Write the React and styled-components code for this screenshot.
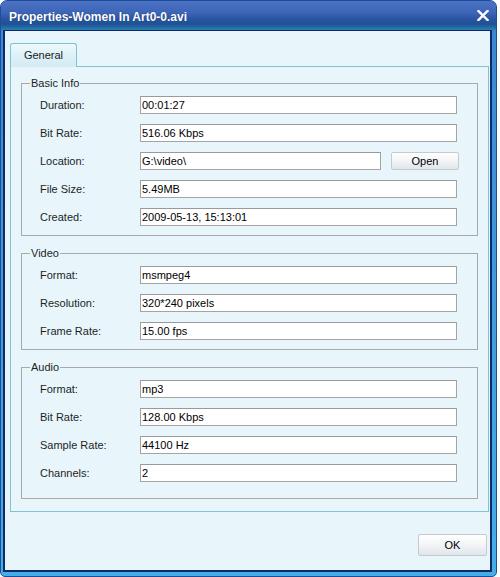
import React from "react";
import styled, { createGlobalStyle } from "styled-components";

const GlobalStyle = createGlobalStyle`
  html, body { margin: 0; padding: 0; background: #ffffff; }
  body { font-family: "Liberation Sans", Arial, sans-serif; }
  * { box-sizing: border-box; }
`;

const Window = styled.div`
  width: 497px;
  height: 577px;
  border: 1px solid #1b4d9a;
  border-radius: 7px 7px 5px 5px;
  background: linear-gradient(180deg, #3a86d0 0%, #46aee6 100%);
  display: flex;
  flex-direction: column;
  overflow: hidden;
`;

const TitleBar = styled.div`
  height: 29px;
  flex: none;
  padding: 2px 7px 0 8px;
  display: flex;
  align-items: center;
  justify-content: space-between;
  background: linear-gradient(
    180deg,
    #4c72c2 0%,
    #3d65b8 40%,
    #2a54a3 62%,
    #1e5294 80%,
    #2a80b2 100%
  );
  color: #ffffff;
  font-weight: bold;
  font-size: 12px;
  letter-spacing: 0;
`;

const Title = styled.span`
  text-shadow: 0 0 1px rgba(0, 0, 40, 0.5);
`;

const CloseIcon = styled.svg`
  display: block;
  margin-top: -2px;
`;

const Frame = styled.div`
  flex: 1;
  display: flex;
  padding: 0 4px 4px 2px;
`;

const Content = styled.div`
  flex: 1;
  display: flex;
  flex-direction: column;
  background: #e8f6fb;
  border: 2px solid #0d2a6c;
  border-top-width: 1px;
  padding: 12px 1px 0 5px;
`;

const TabStrip = styled.div`
  display: flex;
`;

const Tab = styled.div`
  position: relative;
  z-index: 1;
  width: 67px;
  height: 24px;
  margin-bottom: -1px;
  border: 1px solid #7fc1d5;
  border-bottom: none;
  border-radius: 3px 3px 0 0;
  background: linear-gradient(180deg, #eef9fc 0%, #dcf0f7 55%, #d4ebf4 100%);
  display: flex;
  align-items: center;
  justify-content: center;
  padding-bottom: 1px;
  font-size: 11px;
  color: #1a1a1a;
`;

const Panel = styled.div`
  width: 479px;
  border: 1px solid #7fc1d5;
  padding: 9px 10px 12px 10px;
  display: flex;
  flex-direction: column;
  gap: 10px;
`;

const Group = styled.fieldset`
  margin: 0;
  padding: 0;
  min-width: 0;
  border: 1px solid #a9a9a9;
`;

const Legend = styled.legend`
  margin-left: 8px;
  padding: 0 1px;
  font-size: 11px;
  line-height: 14px;
  color: #1e1e1e;
`;

const Rows = styled.div`
  display: flex;
  flex-direction: column;
  gap: 10px;
  padding: 6px 0 ${(p) => p.$pb}px 18px;
`;

const Row = styled.div`
  display: grid;
  grid-template-columns: 100px auto;
  align-items: center;
  height: 18px;
`;

const Label = styled.span`
  font-size: 11px;
  line-height: 18px;
  color: #1e1e1e;
  white-space: nowrap;
`;

const Inline = styled.div`
  display: flex;
  align-items: center;
`;

const Field = styled.div`
  width: ${(p) => p.$w}px;
  height: 18px;
  border: 1px solid #a4a4a4;
  border-top-color: #9a9a9a;
  background: #ffffff;
  padding: 0 1px;
  font-size: 11px;
  line-height: 16px;
  color: #000000;
  white-space: nowrap;
  overflow: hidden;
`;

const Button = styled.button`
  width: ${(p) => p.$w}px;
  height: ${(p) => p.$h}px;
  margin-left: ${(p) => p.$ml || 0}px;
  padding: 0;
  border: 1px solid #c4cad0;
  border-radius: 2px;
  background: linear-gradient(180deg, #ffffff 0%, #f6f7f9 40%, #e9edf0 75%, #e1e6ea 100%);
  font-family: "Liberation Sans", Arial, sans-serif;
  font-size: 11px;
  color: #000000;
  cursor: default;
`;

const Footer = styled.div`
  display: flex;
  justify-content: flex-end;
  margin-top: 22px;
  padding-right: 2px;
`;

const groups = [
  {
    title: "Basic Info",
    pb: 9,
    rows: [
      ["Duration:", "00:01:27"],
      ["Bit Rate:", "516.06 Kbps"],
      ["Location:", "G:\\video\\", true],
      ["File Size:", "5.49MB"],
      ["Created:", "2009-05-13, 15:13:01"],
    ],
  },
  {
    title: "Video",
    pb: 9,
    rows: [
      ["Format:", "msmpeg4"],
      ["Resolution:", "320*240 pixels"],
      ["Frame Rate:", "15.00 fps"],
    ],
  },
  {
    title: "Audio",
    pb: 16,
    rows: [
      ["Format:", "mp3"],
      ["Bit Rate:", "128.00 Kbps"],
      ["Sample Rate:", "44100 Hz"],
      ["Channels:", "2"],
    ],
  },
];

export default function App() {
  return (
    <>
      <GlobalStyle />
      <Window>
        <TitleBar>
          <Title>Properties-Women In Art0-0.avi</Title>
          <CloseIcon width="12" height="11" viewBox="0 0 12 11">
            <path
              d="M1.5 1 L10.5 10 M10.5 1 L1.5 10"
              stroke="#ffffff"
              strokeWidth="2.4"
              strokeLinecap="square"
              fill="none"
            />
          </CloseIcon>
        </TitleBar>
        <Frame>
          <Content>
            <TabStrip>
              <Tab>General</Tab>
            </TabStrip>
            <Panel>
              {groups.map((g) => (
                <Group key={g.title}>
                  <Legend>{g.title}</Legend>
                  <Rows $pb={g.pb}>
                    {g.rows.map(([label, value, open]) => (
                      <Row key={label}>
                        <Label>{label}</Label>
                        {open ? (
                          <Inline>
                            <Field $w={241}>{value}</Field>
                            <Button $w={68} $h={18} $ml={10}>
                              Open
                            </Button>
                          </Inline>
                        ) : (
                          <Field $w={317}>{value}</Field>
                        )}
                      </Row>
                    ))}
                  </Rows>
                </Group>
              ))}
            </Panel>
            <Footer>
              <Button $w={69} $h={22}>
                OK
              </Button>
            </Footer>
          </Content>
        </Frame>
      </Window>
    </>
  );
}
